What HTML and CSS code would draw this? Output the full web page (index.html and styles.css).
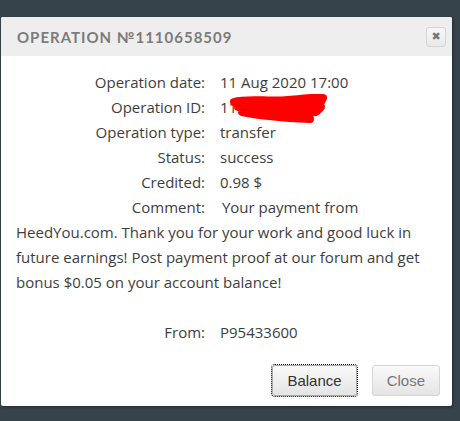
FILE: index.html
```html
<!DOCTYPE html>
<html lang="en">
<head>
  <meta charset="UTF-8">
  <title>Operation</title>
  <link rel="stylesheet" href="styles.css">
</head>
<body>
  <div class="backdrop"></div>

  <div class="dialog">
    <div class="dialog-head">
      <span class="dialog-title">Operation №1110658509</span>
      <button class="dialog-x" type="button">&#x2716;</button>
    </div>

    <div class="dialog-body">
      <div class="row"><span class="label">Operation date:</span>11 Aug 2020 17:00</div>
      <div class="row"><span class="label">Operation ID:</span><span class="masked">1110658509<svg class="scribble" width="100" height="30" viewBox="0 0 100 30"><path d="M6 8 C20 4 40 8 60 6 C75 5 86 3 95 4 L92 10 C70 12 50 10 10 13 C40 15 70 13 93 13 L88 18 C66 20 46 17 14 18 C40 23 60 24 82 25" fill="none" stroke="#f00" stroke-width="8" stroke-linecap="round" stroke-linejoin="round"/></svg></span></div>
      <div class="row"><span class="label">Operation type:</span>transfer</div>
      <div class="row"><span class="label">Status:</span>success</div>
      <div class="row"><span class="label">Credited:</span>0.98 $</div>
      <div class="row comment"><span class="label">Comment:</span> Your payment from HeedYou.com. Thank you for your work and good luck in future earnings! Post payment proof at our forum and get bonus $0.05 on your account balance!</div>
      <div class="row from"><span class="label">From:</span>P95433600</div>

      <div class="dialog-buttons">
        <button class="btn focused" type="button">Balance</button>
        <button class="btn muted" type="button">Close</button>
      </div>
    </div>
  </div>
</body>
</html>
```

FILE: styles.css
```css
body {
  margin: 0;
  background-color: #36434b;
  font-family: "Open Sans", sans-serif;
  height: 421px;
  overflow: hidden;
}

.backdrop {
  height: 17px;
}

.dialog {
  width: 451px;
  margin-left: 1px;
  background: #fff;
  border-radius: 2px;
  box-shadow: 1px 1px 3px rgba(0, 0, 0, 0.4);
}

.dialog-head {
  height: 39px;
  background: #eeeeee;
  display: flex;
  align-items: center;
  justify-content: space-between;
  padding: 0 6px 0 16px;
  border-radius: 2px 2px 0 0;
}

.dialog-title {
  text-transform: uppercase;
  font-family: "Lato", sans-serif;
  font-weight: bold;
  font-size: 15px;
  letter-spacing: 1px;
  color: #7b7b7b;
}

.dialog-x {
  width: 20px;
  height: 20px;
  padding: 0;
  border: 1px solid #d4d4d4;
  border-radius: 3px;
  background: linear-gradient(#f8f8f8, #e9e9e9);
  color: #777;
  font-size: 11px;
  line-height: 18px;
  font-family: "DejaVu Sans", sans-serif;
}

.dialog-body {
  padding: 14px 15px 10px 15px;
  color: #3e3e3e;
  font-size: 15px;
  line-height: 25px;
}

.label {
  display: inline-block;
  width: 189px;
  text-align: right;
  margin-right: 15px;
}

.comment .label {
  margin-right: 13px;
}

.from {
  margin-top: 25px;
}

.masked {
  position: relative;
}

.scribble {
  position: absolute;
  left: 8px;
  top: -3px;
}

.dialog-buttons {
  display: flex;
  justify-content: flex-end;
  gap: 15px;
  margin-top: 20px;
  margin-right: -3px;
}

.btn {
  height: 31px;
  padding: 0 14px;
  border: 1px solid #c8c8c8;
  border-radius: 3px;
  background: linear-gradient(#fafafa, #e4e4e4);
  font-family: "Liberation Sans", sans-serif;
  font-size: 15px;
  color: #333;
}

.btn.focused {
  outline: 1px dotted #000;
  outline-offset: 0;
  border-color: #a9a9a9;
}

.btn.muted {
  color: #777;
  border-color: #d6d6d6;
}
```
